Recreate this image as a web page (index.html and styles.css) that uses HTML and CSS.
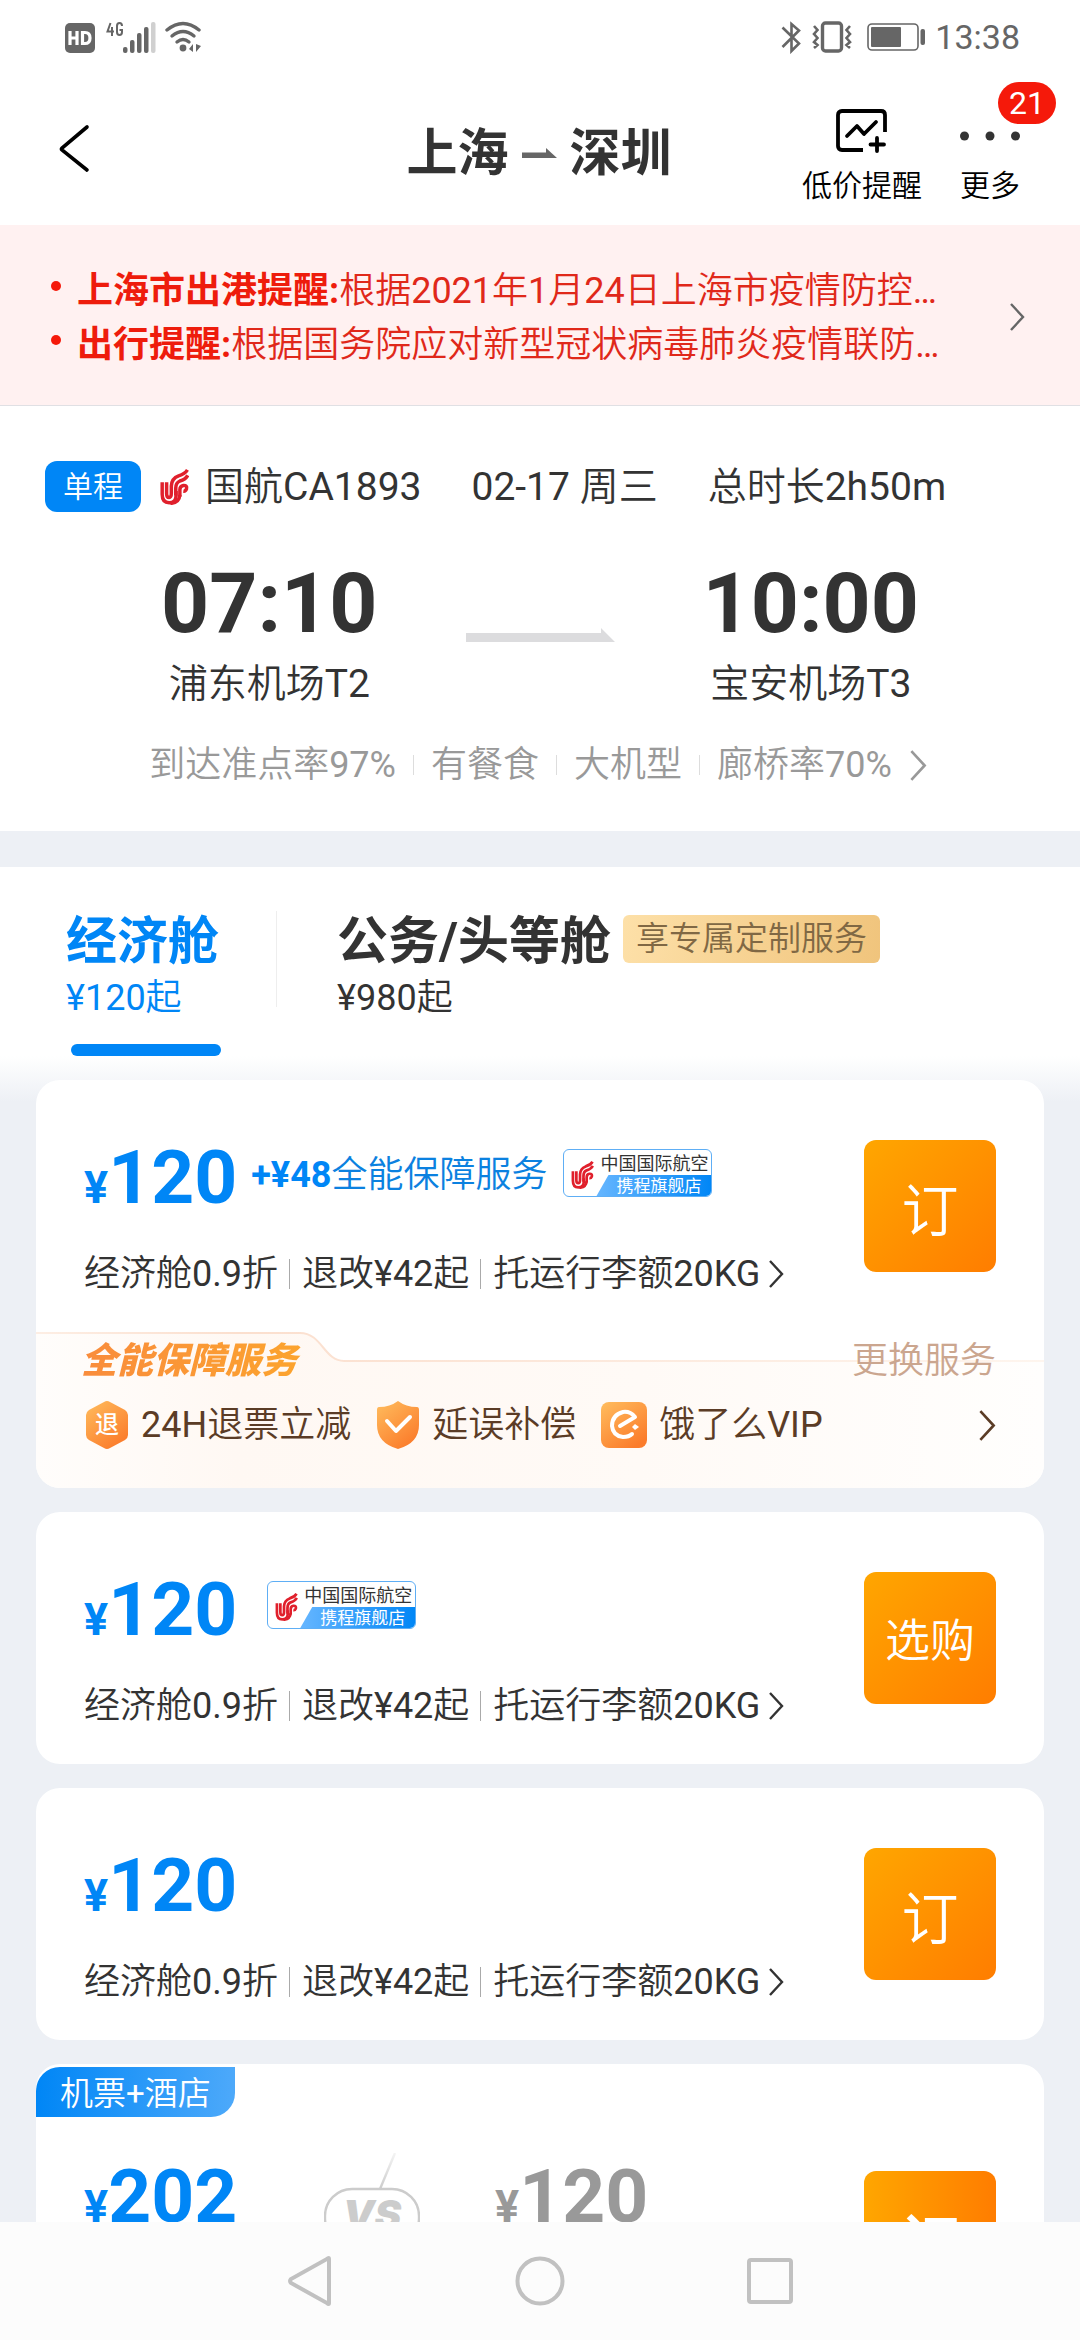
FILE: index.html
```html
<!DOCTYPE html>
<html lang="zh-CN">
<head>
<meta charset="utf-8">
<meta name="viewport" content="width=device-width, initial-scale=1">
<title>上海 - 深圳</title>
<link rel="stylesheet" href="styles.css">
</head>
<body>
<svg class="defs" width="0" height="0" aria-hidden="true">
  <defs>
    <linearGradient id="orange" x1="0" y1="0" x2="0.7" y2="1">
      <stop offset="0" stop-color="#ffbd5e"/><stop offset="1" stop-color="#fb7c2b"/>
    </linearGradient>
    <linearGradient id="cream" x1="0" y1="0" x2="1" y2="0">
      <stop offset="0" stop-color="#fffdfb"/><stop offset="0.2" stop-color="#fff8f3"/><stop offset="0.6" stop-color="#fffaf6"/><stop offset="1" stop-color="#fffefd"/>
    </linearGradient>
    <linearGradient id="creamLine" x1="0" y1="0" x2="1" y2="0">
      <stop offset="0" stop-color="#fdeee4"/><stop offset="0.2" stop-color="#fbdfce"/><stop offset="1" stop-color="#fef5ee"/>
    </linearGradient>
    <linearGradient id="antenna" x1="0" y1="1" x2="0" y2="0">
      <stop offset="0" stop-color="#ccc"/><stop offset="1" stop-color="#f4f4f4"/>
    </linearGradient>
    <symbol id="phoenix" viewBox="0 0 90 114">
      <g fill="none" stroke="#e0202c" stroke-width="11">
        <path d="M6 42V80Q6 107 28 107Q50 107 50 84V70"/>
        <path d="M20 42V78Q20 90 28 90Q35 90 35 76V54Q36 30 58 22Q78 16 86 3"/>
        <path d="M49 84V60Q49 44 62 38Q80 33 87 20"/>
        <path d="M62 88V66Q62 54 73 52Q86 51 83 63Q80 71 73 70"/>
        <path d="M32 109Q60 107 62 82"/>
      </g>
    </symbol>
    <symbol id="chevron" viewBox="0 0 16 28">
      <path d="M2 1 14 14 2 27" fill="none" stroke="currentColor" stroke-width="2.4"/>
    </symbol>
  </defs>
</svg>

<div class="status">
  <div class="status-group">
    <svg width="30" height="31" viewBox="0 0 30 31"><rect y="1" width="30" height="30" rx="5" fill="#666"/><path d="M5 9v14M12 9v14M5 16h7M17.500 10.500v11h2.500q5 0 5-5.500t-5-5.500z" fill="none" stroke="#fff" stroke-width="3.200"/></svg>
    <svg class="signal" width="50" height="33" viewBox="0 0 50 33"><g fill="#666"><rect x="17" y="26" width="4.500" height="6" rx="2"/><rect x="24" y="19" width="4.500" height="13" rx="2"/><rect x="31" y="12" width="4.500" height="20" rx="2"/><rect x="38" y="6" width="4.500" height="26" rx="2"/></g><rect x="45" y="1" width="4.500" height="31" rx="2" fill="#d0d0d0"/><path d="M4.500 2 1.500 10.500H8M6 6v9M16 5q0-3-2.500-3T11 5v6q0 3 2.500 3t2.500-3V9h-2.500" fill="none" stroke="#666" stroke-width="2"/></svg>
    <svg width="37" height="33" viewBox="0 0 37 33"><g fill="none" stroke="#666" stroke-width="3.400" stroke-linecap="round"><path d="M2 9Q18 -4 34 9"/><path d="M7 15Q18 6 29 15"/><path d="M12 21Q18 16 24 21"/></g><circle cx="18" cy="27" r="3.400" fill="#666"/><path d="M28 23v8l-4-3zM31 23v8l5-6z" fill="#666"/></svg>
  </div>
  <div class="status-group">
    <svg width="20" height="33" viewBox="0 0 20 33"><path d="M1.500 6.500 18 22.500 10.500 30V3L18 9.500 1.500 26" fill="none" stroke="#666" stroke-width="2.600"/></svg>
    <svg class="vibrate" width="40" height="33" viewBox="0 0 40 33"><rect x="10.500" y="2" width="19" height="28" rx="3" fill="none" stroke="#666" stroke-width="3.400"/><path d="M2 5l3.500 4L2 13l3.500 4L2 21l3.500 3L2 27M38 5l-3.500 4L38 13l-3.500 4L38 21l-3.500 3L38 27" fill="none" stroke="#666" stroke-width="2.600"/></svg>
    <svg width="59" height="30" viewBox="0 0 59 30"><rect x="1" y="2" width="50" height="26" rx="4" fill="none" stroke="#666" stroke-width="1.600"/><rect x="4" y="5" width="30" height="20" rx="1" fill="#666"/><rect x="53.500" y="7" width="4.500" height="16" rx="2" fill="#666"/></svg>
    <span class="clock">13:38</span>
  </div>
</div>

<header class="header">
  <button class="icon-button back" aria-label="返回"><svg width="32" height="50" viewBox="0 0 32 50"><path d="M29 3 4 24 Q3 25 4 26L29 46" fill="none" stroke="#000" stroke-width="3.600" stroke-linecap="round"/></svg></button>
  <h1 class="title">上海<svg width="35" height="12" viewBox="0 0 35 12"><path d="M0 4.500H24V0L35 10H0z" fill="#666"/></svg>深圳</h1>
  <div class="actions">
    <button class="icon-button action">
      <svg width="52" height="44" viewBox="0 0 52 44"><g fill="none" stroke="#000" stroke-width="3.800"><path d="M27 41H6Q2 41 2 37V6Q2 2 6 2H45Q49 2 49 6V23"/><path d="M11 27 21 17 28 25 40 13" stroke-linecap="round" stroke-linejoin="round"/><path d="M41 29V42M34.500 35.500H48" stroke-linecap="round"/></g></svg>
      低价提醒
    </button>
    <button class="icon-button action">
      <svg width="60" height="44" viewBox="0 0 60 44"><g fill="#333"><circle cx="4.500" cy="27" r="4.500"/><circle cx="30" cy="27" r="4.500"/><circle cx="55.500" cy="27" r="4.500"/></g></svg>
      更多
      <span class="count">21</span>
    </button>
  </div>
</header>

<main class="content">
  <section class="notice">
    <ul class="notice-list">
      <li><strong>上海市出港提醒:</strong>根据2021年1月24日上海市疫情防控…</li>
      <li><strong>出行提醒:</strong>根据国务院应对新型冠状病毒肺炎疫情联防…</li>
    </ul>
    <svg width="16" height="28"><use href="#chevron"/></svg>
  </section>

  <section class="flight">
    <div class="flight-meta">
      <span class="trip-type">单程</span>
      <svg class="airline" width="29" height="36"><use href="#phoenix"/></svg>
      <span class="flight-no">国航CA1893</span>
      <span>02-17 周三</span>
      <span>总时长2h50m</span>
    </div>
    <div class="route">
      <div class="stop"><time>07:10</time><span>浦东机场T2</span></div>
      <svg width="149" height="14" viewBox="0 0 149 14"><path d="M0 5H135V0L149 14H0z" fill="#dcdcde"/></svg>
      <div class="stop"><time>10:00</time><span>宝安机场T3</span></div>
    </div>
    <a class="facts" href="#facts">
      <span>到达准点率97%</span><i></i><span>有餐食</span><i></i><span>大机型</span><i></i><span>廊桥率70%</span>
      <svg width="18" height="31"><use href="#chevron"/></svg>
    </a>
  </section>

  <nav class="cabins">
    <button class="cabin active"><b>经济舱</b><span>¥120起</span></button>
    <button class="cabin"><b>公务/头等舱<em>享专属定制服务</em></b><span>¥980起</span></button>
  </nav>

  <div class="fares">
    <article class="card">
      <div class="fare">
        <div class="info">
          <div class="price-row">
            <span class="price"><small>¥</small>120</span>
            <span class="extra"><b>+¥48</b>全能保障服务</span>
            <span class="store"><svg width="23" height="28"><use href="#phoenix"/></svg><span class="store-top">中国国际航空</span><span class="store-bottom">携程旗舰店</span></span>
          </div>
          <a class="terms" href="#terms"><span>经济舱0.9折</span><i></i><span>退改¥42起</span><i></i><span>托运行李额20KG</span><svg width="16" height="28"><use href="#chevron"/></svg></a>
        </div>
        <button class="buy">订</button>
      </div>
      <div class="service">
        <svg class="service-bg" viewBox="0 0 1008 156" preserveAspectRatio="xMinYMin slice" aria-hidden="true">
          <path d="M0 1H264C286 1 288 29 308 29H1008V156H0z" fill="url(#cream)"/>
          <path d="M0 1H264C286 1 288 29 308 29H1008" fill="none" stroke="url(#creamLine)" stroke-width="2"/>
        </svg>
        <div class="service-head"><strong>全能保障服务</strong><a href="#change">更换服务</a></div>
        <div class="benefits">
          <span class="benefit"><span class="hex"><svg width="44" height="48" viewBox="0 0 44 48"><path d="M19 1Q22 -1 25 1L40 9Q43 11 43 14V34Q43 37 40 39L25 47Q22 49 19 47L4 39Q1 37 1 34V14Q1 11 4 9z" fill="url(#orange)"/></svg><b>退</b></span>24H退票立减</span>
          <span class="benefit"><svg width="44" height="48" viewBox="0 0 44 48"><path d="M22 0Q30 6 41 6Q43 6 43 9V24Q43 42 22 48Q1 42 1 24V9Q1 6 3 6Q14 6 22 0z" fill="url(#orange)"/><path d="M11 20 20 30 34 16" fill="none" stroke="#fff" stroke-width="4" stroke-linecap="round" stroke-linejoin="round"/></svg>延误补偿</span>
          <span class="benefit"><svg width="46" height="48" viewBox="0 0 46 48"><rect x="0" y="1" width="46" height="46" rx="8" fill="url(#orange)"/><path d="M19 25 34 16Q29 10 22 11Q11 14 11 25Q12 35 22 36Q28 36 31 33" fill="none" stroke="#fff" stroke-width="4" stroke-linecap="round" stroke-linejoin="round"/><path d="M34 23l4 3-4 3-3-3z" fill="#fff"/></svg>饿了么VIP</span>
          <svg class="more" width="18" height="31"><use href="#chevron"/></svg>
        </div>
      </div>
    </article>

    <article class="card">
      <div class="fare">
        <div class="info">
          <div class="price-row">
            <span class="price"><small>¥</small>120</span>
            <span class="store spaced"><svg width="23" height="28"><use href="#phoenix"/></svg><span class="store-top">中国国际航空</span><span class="store-bottom">携程旗舰店</span></span>
          </div>
          <a class="terms" href="#terms"><span>经济舱0.9折</span><i></i><span>退改¥42起</span><i></i><span>托运行李额20KG</span><svg width="16" height="28"><use href="#chevron"/></svg></a>
        </div>
        <button class="buy two">选购</button>
      </div>
    </article>

    <article class="card">
      <div class="fare">
        <div class="info">
          <div class="price-row"><span class="price"><small>¥</small>120</span></div>
          <a class="terms" href="#terms"><span>经济舱0.9折</span><i></i><span>退改¥42起</span><i></i><span>托运行李额20KG</span><svg width="16" height="28"><use href="#chevron"/></svg></a>
        </div>
        <button class="buy">订</button>
      </div>
    </article>

    <article class="card bundle">
      <span class="bundle-tag">机票+酒店</span>
      <div class="fare">
        <div class="compare">
          <span class="price"><small>¥</small>202</span>
          <span class="versus"><svg width="96" height="96" viewBox="0 0 96 96"><path d="M56 36 71 0" stroke="url(#antenna)" stroke-width="2.400"/><rect x="1" y="36" width="94" height="56" rx="27" fill="#fff" stroke="#ccc" stroke-width="2.400"/></svg><b>VS</b></span>
          <span class="price muted"><small>¥</small>120</span>
        </div>
        <button class="buy">订</button>
      </div>
    </article>
  </div>
</main>

<nav class="system-nav">
  <button class="icon-button" aria-label="返回"><svg width="46" height="52" viewBox="0 0 46 52"><path d="M42 4V48Q42 50 40 48L4 28Q2 26 4 24L40 4Q42 2 42 4z" fill="none" stroke="#c1c1c1" stroke-width="4"/></svg></button>
  <button class="icon-button" aria-label="主页"><svg width="50" height="50" viewBox="0 0 50 50"><circle cx="25" cy="25" r="22.500" fill="none" stroke="#c1c1c1" stroke-width="4"/></svg></button>
  <button class="icon-button" aria-label="最近任务"><svg width="46" height="46" viewBox="0 0 46 46"><rect x="2" y="2" width="42" height="42" rx="2" fill="none" stroke="#c1c1c1" stroke-width="4"/></svg></button>
</nav>
</body>
</html>
```
FILE: styles.css
```css
* { box-sizing: border-box; }

body {
  margin: 0;
  height: 100vh;
  display: flex;
  flex-direction: column;
  overflow: hidden;
  background: #fff;
  color: #333;
  font-family: Roboto, "Noto Sans CJK SC DemiLight", "Noto Sans CJK SC Light", "Noto Sans CJK SC", sans-serif;
  font-size: 36px;
  line-height: 48px;
}

svg { display: block; flex: none; }
.defs { position: absolute; }
a { color: inherit; text-decoration: none; }
i { font-style: normal; }
button {
  margin: 0;
  padding: 0;
  border: 0;
  background: none;
  color: inherit;
  font: inherit;
  text-align: left;
}
b, strong, h1, .price, time { font-family: Roboto, "Noto Sans CJK SC", sans-serif; }

/* Status bar */
.status {
  flex: none;
  display: flex;
  justify-content: space-between;
  height: 72px;
  padding: 6px 60px 0 65px;
  color: #666;
}
.status-group { display: flex; align-items: center; height: 66px; padding-bottom: 4px; }
.status-group:first-child { gap: 11px; }
.signal { margin-right: -2px; }
.vibrate { margin: 0 15px 0 11px; }
.clock { margin-left: 9px; font-size: 34px; }

/* Header */
.header {
  flex: none;
  display: grid;
  grid-template-columns: 1fr auto 1fr;
  align-items: start;
  height: 153px;
  padding: 37px 60px 0 58px;
}
.back { justify-self: start; padding-top: 15px; }
.title {
  display: flex;
  align-items: center;
  gap: 13px;
  margin: 15px 0 0;
  font-size: 51px;
  line-height: 60px;
}
.actions { display: flex; justify-content: flex-end; gap: 38px; }
.action {
  position: relative;
  display: flex;
  flex-direction: column;
  align-items: center;
  gap: 15px;
  color: #000;
  font-size: 30px;
  line-height: 36px;
}
.count {
  position: absolute;
  top: -27px;
  left: 38px;
  width: 58px;
  border-radius: 21px;
  background: #f5190a;
  color: #fff;
  font-size: 32px;
  line-height: 42px;
  text-align: center;
}

/* Scrolling content */
.content { flex: 1; min-height: 0; overflow: hidden; background: #edf0f5; }

.notice {
  display: flex;
  align-items: center;
  justify-content: space-between;
  padding: 36px 55px 33px 51px;
  border-bottom: 1px solid #e0e0e4;
  background: #fff1f1;
  color: #666;
}
.notice-list {
  margin: 0;
  padding: 3px 0 0;
  list-style: none;
  color: #e0281a;
  line-height: 54px;
}
.notice-list li { display: flex; white-space: nowrap; }
.notice-list li::before {
  content: "";
  width: 10px;
  height: 10px;
  margin: 17px 16px 0 0;
  border-radius: 50%;
  background: #f5190a;
}
.notice-list strong { color: #ee1c0c; }

.flight { padding: 55px 45px 42px; background: #fff; }
.flight-meta { display: flex; align-items: center; gap: 50px; font-size: 39px; white-space: nowrap; }
.trip-type {
  margin-right: -31px;
  padding: 0 18px;
  border-radius: 12px;
  background: #0086f6;
  color: #fff;
  font-size: 30px;
  line-height: 51px;
}
.airline { margin-right: -34px; }
.route { display: flex; justify-content: center; align-items: center; gap: 88px; margin-top: 50px; }
.stop { display: flex; flex-direction: column; align-items: center; gap: 14px; font-size: 39px; }
.stop time { font-size: 84px; font-weight: 700; line-height: 84px; }
.facts {
  display: flex;
  justify-content: center;
  align-items: center;
  gap: 17px;
  margin-top: 33px;
  padding-right: 4px;
  color: #999;
  white-space: nowrap;
}
.facts i { width: 1px; height: 20px; background: #ddd; }

/* Cabin tabs */
.cabins { display: flex; margin-top: 36px; padding: 44px 66px 0; background: #fff; }
.cabin { position: relative; display: flex; flex-direction: column; gap: 3px; height: 145px; line-height: 44px; }
.cabin b { display: flex; align-items: flex-start; gap: 12px; font-size: 51px; line-height: 62px; }
.cabin em {
  margin-top: 4px;
  padding: 0 13px;
  border-radius: 6px;
  background: linear-gradient(100deg, #fde0a8, #f0c47c);
  color: #806844;
  font: 33px/48px Roboto, "Noto Sans CJK SC DemiLight", "Noto Sans CJK SC Light", "Noto Sans CJK SC", sans-serif;
}
.cabin.active { margin-right: 60px; padding-right: 58px; color: #0086f6; }
.cabin.active::before {
  content: "";
  position: absolute;
  right: 0;
  top: 0;
  width: 1px;
  height: 96px;
  background: #eee;
}
.cabin.active::after {
  content: "";
  position: absolute;
  left: 5px;
  bottom: 0;
  width: 150px;
  height: 12px;
  border-radius: 6px;
  background: #0086f6;
}

/* Fare cards */
.fares {
  display: flex;
  flex-direction: column;
  gap: 24px;
  padding: 24px 36px;
  background: linear-gradient(#fff, #edf0f5 46px);
}
.card { overflow: hidden; border-radius: 24px; background: #fff; }
.fare { display: flex; justify-content: space-between; align-items: flex-start; padding: 60px 48px 34px; }
.price-row { display: flex; align-items: flex-start; height: 75px; white-space: nowrap; }
.price { color: #0086f6; font-size: 75px; font-weight: 700; line-height: 75px; white-space: nowrap; }
.price small { font-size: 45px; line-height: 45px; }
.price.muted { color: #999; }
.extra { margin: 11px 0 0 14px; color: #0b81e0; }
.extra b { color: #0086f6; }
.store {
  display: grid;
  grid-template-columns: 36px 110px;
  grid-template-rows: 25px 21px;
  width: 149px;
  height: 48px;
  margin: 9px 0 0 16px;
  overflow: hidden;
  border: 1px solid #5eaef5;
  border-radius: 6px;
  font-family: "Noto Sans CJK SC", sans-serif;
  font-weight: 400;
  font-size: 18px;
  line-height: 25px;
}
.store.spaced { margin-left: 30px; }
.store svg { grid-row: 1 / 3; align-self: center; margin: 3px 0 0 7px; }
.store-bottom {
  width: 116px;
  margin-left: -4px;
  padding-left: 20px;
  background: linear-gradient(90deg, #66b6ff, #0086f6);
  clip-path: polygon(12px 0, 100% 0, 100% 100%, 0 100%);
  color: #fff;
  font-size: 17px;
  line-height: 20px;
}
.terms { display: flex; align-items: center; margin-top: 35px; white-space: nowrap; }
.terms i { width: 1px; height: 30px; margin: 0 12px 0 11px; background: #aaa; }
.terms svg { margin-left: 8px; }
.buy {
  flex: none;
  width: 132px;
  height: 132px;
  border-radius: 12px;
  background: linear-gradient(135deg, #ffa600, #ff7d00);
  color: #fff;
  font-family: "Noto Sans CJK SC DemiLight", "Noto Sans CJK SC Light", "Noto Sans CJK SC", sans-serif;
  font-size: 57px;
  line-height: 132px;
  text-align: center;
}
.buy.two { font-size: 45px; }

/* Bundled service strip */
.service { position: relative; padding: 0 48px 39px; color: #5b3c26; }
.service-bg { position: absolute; inset: 0; width: 100%; height: 100%; }
.service-head { position: relative; display: flex; justify-content: space-between; align-items: center; height: 58px; }
.service-head strong {
  margin-left: -3px;
  padding-right: 8px;
  background: linear-gradient(90deg, #f98c3c, #fca42e);
  background-clip: text;
  -webkit-background-clip: text;
  color: transparent;
  font-style: italic;
  font-weight: 900;
}
.service-head a { color: #cba68f; }
.benefits { position: relative; display: flex; align-items: center; gap: 25px; margin-top: 11px; padding-left: 1px; white-space: nowrap; }
.benefit { display: flex; align-items: center; gap: 12px; }
.hex { display: grid; place-items: center; }
.hex > * { grid-area: 1 / 1; }
.hex b { position: relative; color: #fff; font-size: 24px; line-height: 24px; font-weight: 500; }
.more { margin-left: auto; }

/* Flight + hotel bundle */
.bundle { padding-top: 3px; }
.bundle-tag {
  display: table;
  padding: 3px 24px 0;
  border-radius: 24px 0 24px 0;
  background: linear-gradient(90deg, #0086f6, #4da9fa);
  color: #fff;
  font-size: 33px;
  line-height: 47px;
}
.bundle .fare { padding-top: 42px; }
.bundle .buy {
  margin-top: 12px;
  background: linear-gradient(90deg, #ffa600, #ff7d00);
  font-family: "Noto Sans CJK SC", sans-serif;
  font-weight: 700;
}
.compare { display: grid; grid-template-columns: 240px 171px auto; align-items: start; }
.versus { display: grid; width: 96px; margin-top: -6px; color: #ccc; }
.versus > * { grid-area: 1 / 1; }
.versus b {
  position: relative;
  padding-top: 42px;
  font-family: Inter, sans-serif;
  font-size: 40px;
  font-style: italic;
  font-weight: 900;
  line-height: 40px;
  text-align: center;
}

/* System navigation */
.system-nav {
  position: relative;
  flex: none;
  display: flex;
  justify-content: center;
  align-items: center;
  gap: 182px;
  height: 118px;
  background: #fcfcfc;
}
```
